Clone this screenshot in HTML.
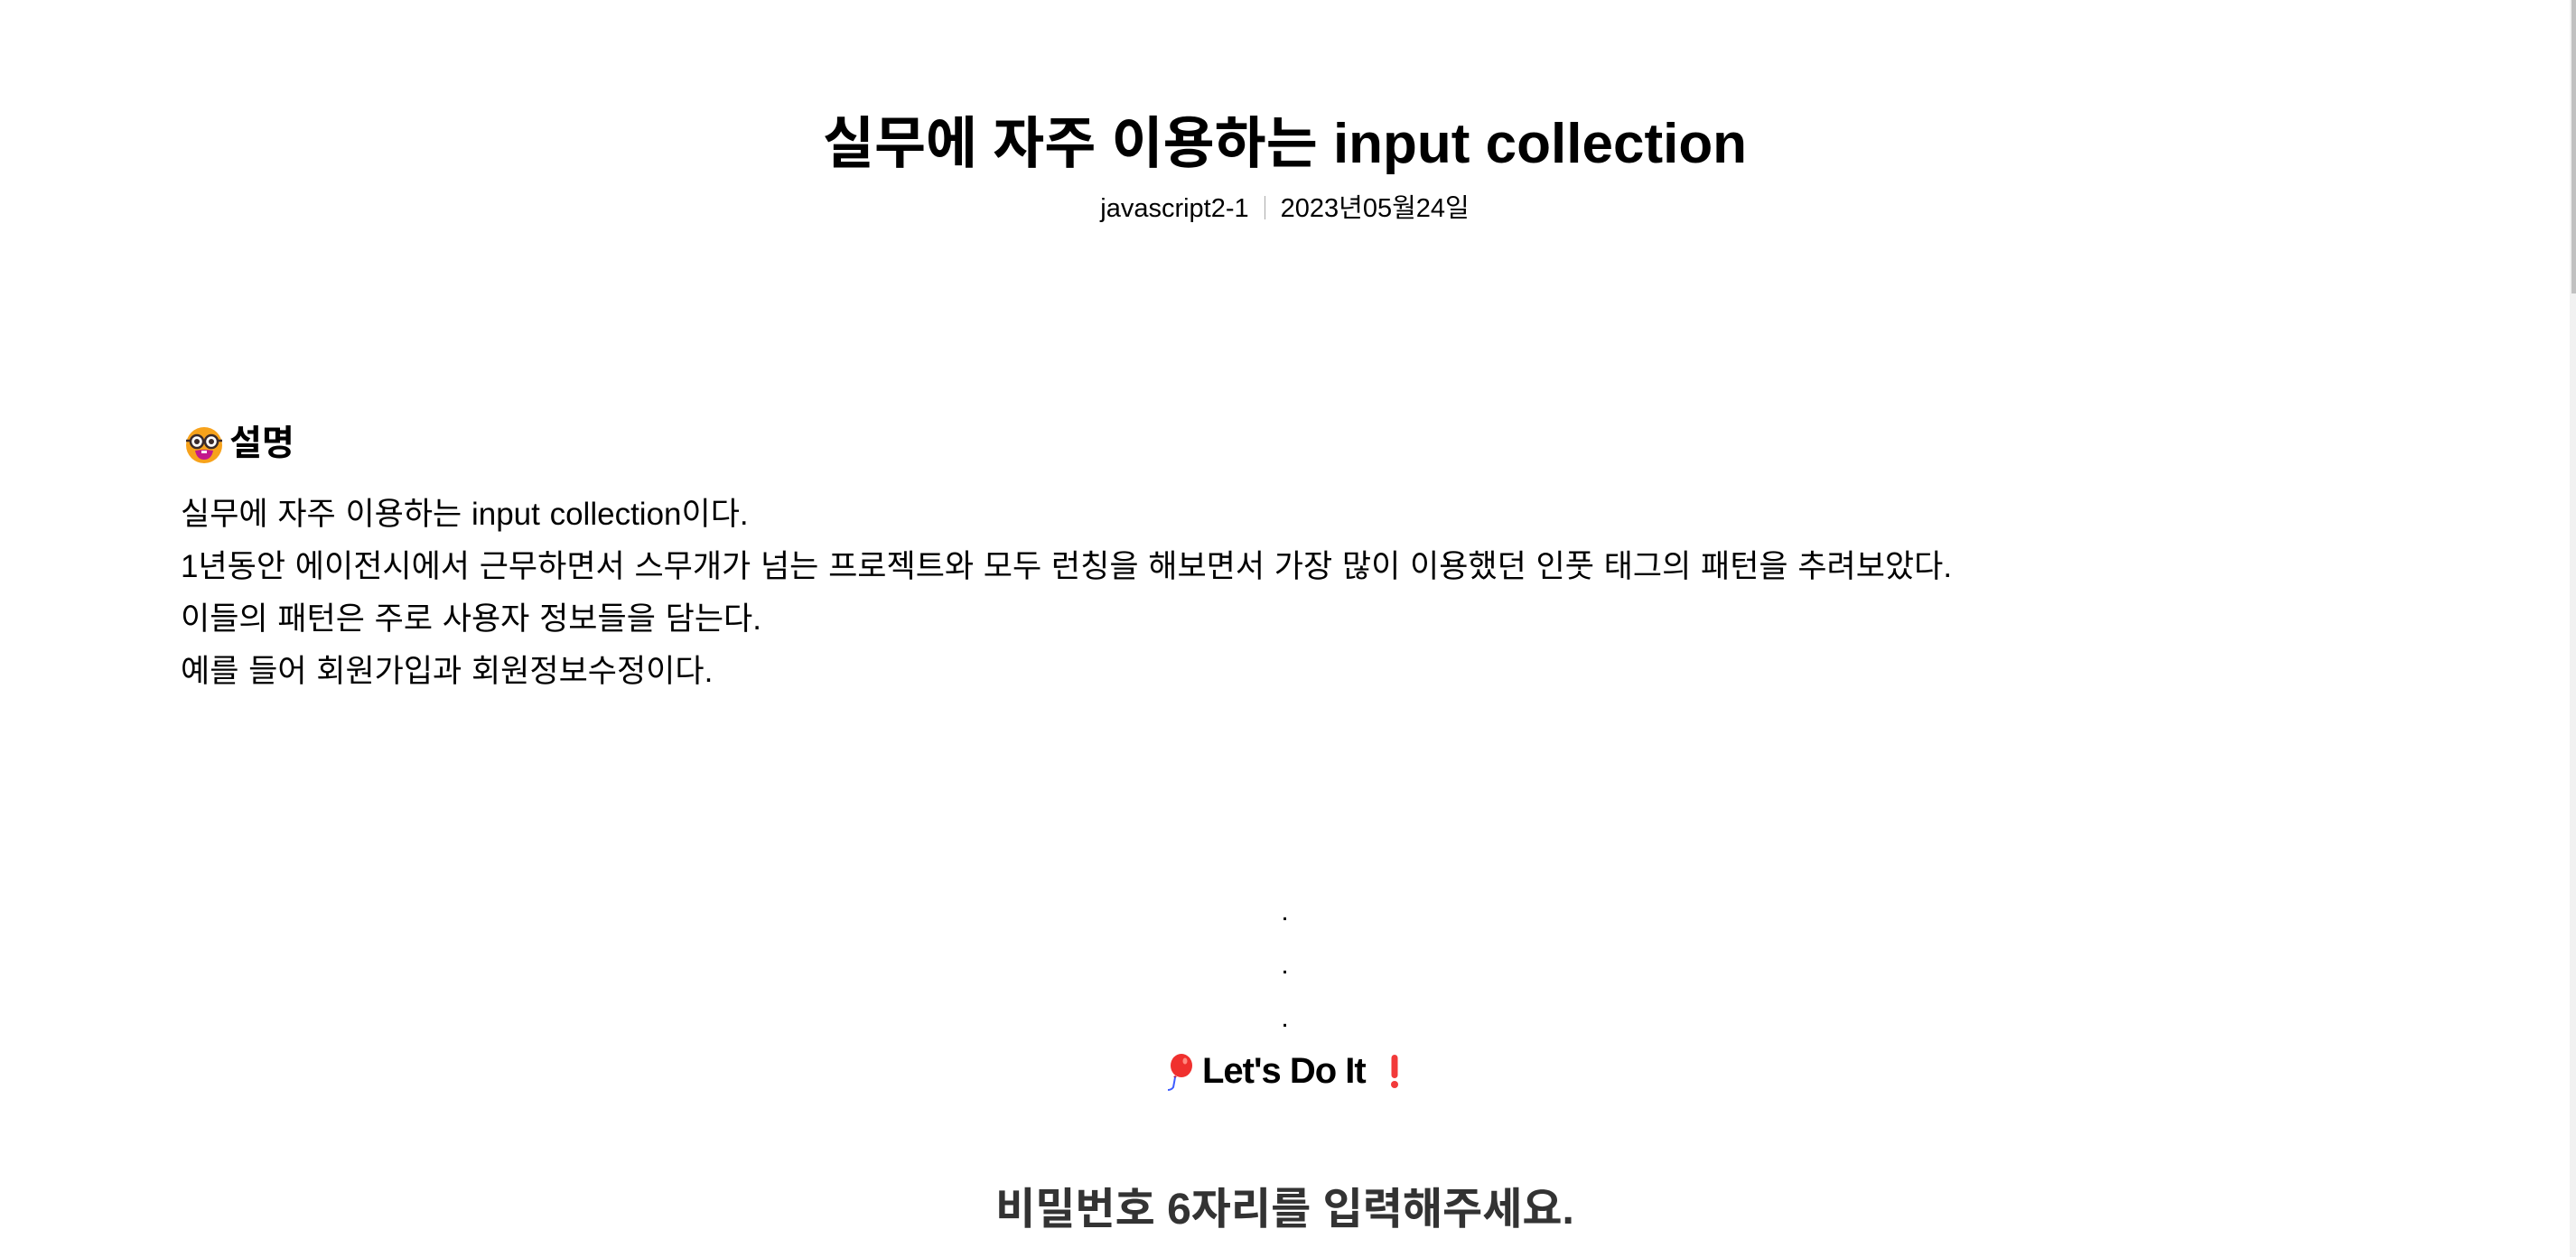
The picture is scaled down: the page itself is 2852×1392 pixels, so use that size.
<!DOCTYPE html>
<html><head><meta charset="utf-8">
<style>
html,body{margin:0;padding:0;background:#fff;width:2852px;height:1392px;overflow:hidden;}
body{font-family:"Liberation Sans","Noto Sans CJK KR",sans-serif;color:#000;position:relative;}
.a{position:absolute;white-space:nowrap;}
.c{left:0;width:2845px;text-align:center;}
.sb{position:absolute;left:2845px;top:0;width:7px;height:1392px;background:#f1f1f1;}
.th{position:absolute;left:2847px;top:0;width:5px;height:325px;background:#c1c1c1;}
.body p{margin:0;height:58px;line-height:58px;font-size:35px;word-spacing:1px;}
</style></head><body>
<div class="a c" style="top:118px;font-size:62px;font-weight:bold;line-height:84px;">실무에 자주 이용하는 input collection</div>
<div class="a c" style="top:213px;font-size:29px;line-height:36px;">javascript2-1<span style="display:inline-block;width:1px;height:26px;background:#aaa;margin:0 17px;vertical-align:-3px;"></span>2023년05월24일</div>

<div class="a" style="left:204px;top:471px;">
<svg width="44" height="44" viewBox="0 0 44 44"><circle cx="22" cy="22" r="20" fill="#f7a21b"/><circle cx="14" cy="18" r="7" fill="#fff" stroke="#3a2a2a" stroke-width="2.5"/><circle cx="30" cy="18" r="7" fill="#fff" stroke="#3a2a2a" stroke-width="2.5"/><line x1="21" y1="18" x2="23" y2="18" stroke="#3a2a2a" stroke-width="2.5"/><line x1="2" y1="17" x2="7" y2="17" stroke="#3a2a2a" stroke-width="2.5"/><line x1="37" y1="17" x2="42" y2="17" stroke="#3a2a2a" stroke-width="2.5"/><circle cx="14" cy="18" r="3" fill="#3a2a2a"/><circle cx="30" cy="18" r="3" fill="#3a2a2a"/><path d="M12 28 Q22 26 32 28 Q30 38 22 38 Q14 38 12 28Z" fill="#c2188c"/><rect x="19" y="28" width="6" height="3" fill="#fff"/></svg>
</div>
<div class="a" style="left:254px;top:466px;font-size:39px;font-weight:bold;line-height:52px;">설명</div>

<div class="a body" style="left:200px;top:541px;">
<p>실무에 자주 이용하는 input collection이다.</p>
<p>1년동안 에이전시에서 근무하면서 스무개가 넘는 프로젝트와 모두 런칭을 해보면서 가장 많이 이용했던 인풋 태그의 패턴을 추려보았다.</p>
<p>이들의 패턴은 주로 사용자 정보들을 담는다.</p>
<p>예를 들어 회원가입과 회원정보수정이다.</p>
</div>

<div class="a c" style="top:990px;font-size:30px;line-height:40px;">.</div>
<div class="a c" style="top:1049px;font-size:30px;line-height:40px;">.</div>
<div class="a c" style="top:1108px;font-size:30px;line-height:40px;">.</div>

<div class="a" style="left:1286px;top:1166px;">
<svg width="36" height="42" viewBox="0 0 36 42"><ellipse cx="22" cy="14" rx="12" ry="13" fill="#f0302e"/><ellipse cx="26" cy="9" rx="2.5" ry="3.5" fill="#ff8a80"/><path d="M15 25 L13 27 L17 27Z" fill="#b0124a"/><path d="M15 27 Q14 33 13 38 Q11 41 7 41" fill="none" stroke="#3d5cff" stroke-width="2"/></svg>
</div>
<div class="a" style="left:1331px;top:1159px;font-size:40px;font-weight:bold;line-height:54px;letter-spacing:-1px;">Let's Do It</div>
<div class="a" style="left:1538px;top:1168px;">
<svg width="12" height="38" viewBox="0 0 12 38"><rect x="2.5" y="0" width="7" height="26" rx="3.5" fill="#f23a3a"/><circle cx="6" cy="33" r="4" fill="#f23a3a"/></svg>
</div>

<div class="a c" style="top:1307px;font-size:48px;font-weight:bold;line-height:66px;color:#333;">비밀번호 6자리를 입력해주세요.</div>

<div class="sb"></div><div class="th"></div>
</body></html>
